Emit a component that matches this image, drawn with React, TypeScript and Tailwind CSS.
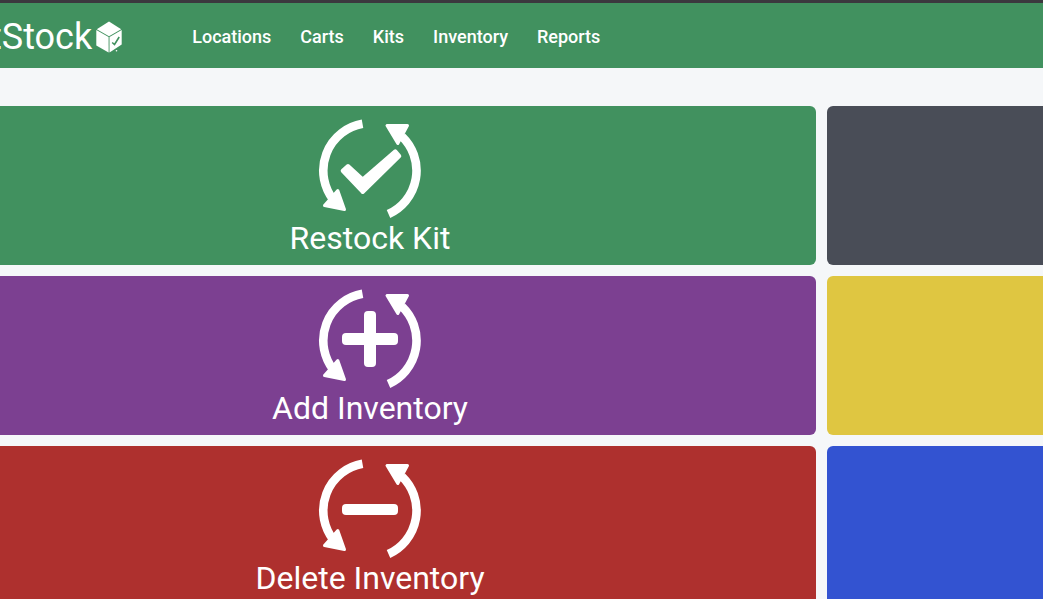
import type { ReactNode } from "react";

const links = ["Locations", "Carts", "Kits", "Inventory", "Reports"];

function CycleIcon({ children }: { children: ReactNode }) {
  return (
    <svg viewBox="0 0 104 100" className="h-[100px] w-[104px]" fill="currentColor" aria-hidden="true">
      {/* Arcs */}
      <g fill="none" stroke="currentColor" strokeWidth="8.6">
        <path d="M44.5 4.8A47.5 47.5 0 0 0 15.5 81" />
        <path d="M70.5 95A47.5 47.5 0 0 0 84 17.5" />
      </g>
      {/* Arrow heads */}
      <g stroke="currentColor" strokeWidth="3" strokeLinejoin="round">
        <path d="M19.8 71.5L26.5 90.5L6.5 86.5Z" />
        <path d="M69 6.5H89.5L79.8 24.5Z" />
      </g>
      {children}
    </svg>
  );
}

function BoxLogo() {
  return (
    <svg viewBox="0 0 26 32" className="h-8 w-[26px]" aria-hidden="true">
      <path d="M13 0.5L25.2 8.2L13 15.2L0.8 8.2Z" fill="white" />
      <path d="M0.3 9L12.6 16V31.5L0.3 24.5Z" fill="white" />
      <path d="M13.5 16L25.7 9V23.5L13.5 31.5Z" fill="white" />
      <path d="M16.2 21.5L18.5 23.5L23.2 16" fill="none" stroke="#41915f" strokeWidth="1.6" />
      <circle cx="20.5" cy="29.8" r="0.8" fill="white" />
    </svg>
  );
}

const actions = [
  {
    label: "Restock Kit",
    color: "bg-[#41915f]",
    side: "bg-[#494d57]",
    icon: (
      <path
        d="M24.7 51.8L30 47L44.7 60.5L77.3 32.3L81.3 37L44.7 73Z"
        stroke="currentColor"
        strokeWidth="4"
        strokeLinejoin="round"
      />
    ),
  },
  {
    label: "Add Inventory",
    color: "bg-[#7c4091]",
    side: "bg-[#dfc641]",
    icon: (
      <>
        <rect x="24" y="44" width="56" height="12" rx="4" />
        <rect x="46" y="22" width="12" height="56" rx="4" />
      </>
    ),
  },
  {
    label: "Delete Inventory",
    color: "bg-[#ae302e]",
    side: "bg-[#3353d1]",
    icon: <rect x="24" y="45" width="56" height="11" rx="4" />,
  },
];

export default function App() {
  return (
    <div className="min-h-screen overflow-hidden bg-[#f5f7f9] font-[Roboto,sans-serif] text-white">
      <header className="flex h-[68px] items-center border-t-[3px] border-[#3b383e] bg-[#41915f] pt-[2px]">
        {/* Brand */}
        <a href="#" className="-ml-[10px] flex items-center gap-1">
          <span className="text-[36px] leading-10">tStock</span>
          <BoxLogo />
        </a>
        <nav className="ml-[70px] flex gap-[29px] text-lg font-medium">
          {links.map((link) => (
            <a key={link} href="#">
              {link}
            </a>
          ))}
        </nav>
      </header>

      {/* Action tiles, the board is wider than the window on both sides */}
      <main className="-mr-[676px] -ml-[76px] grid grid-cols-2 gap-[11px] pt-[38px]">
        {actions.map(({ label, color, side, icon }) => [
          <button
            key={label}
            className={`flex h-[159px] flex-col items-center rounded-md pt-[13px] ${color}`}
          >
            <CycleIcon>{icon}</CycleIcon>
            <span className="text-[32px] leading-[38px]">{label}</span>
          </button>,
          <div key={`${label} side`} className={`rounded-md ${side}`} />,
        ])}
      </main>
    </div>
  );
}
